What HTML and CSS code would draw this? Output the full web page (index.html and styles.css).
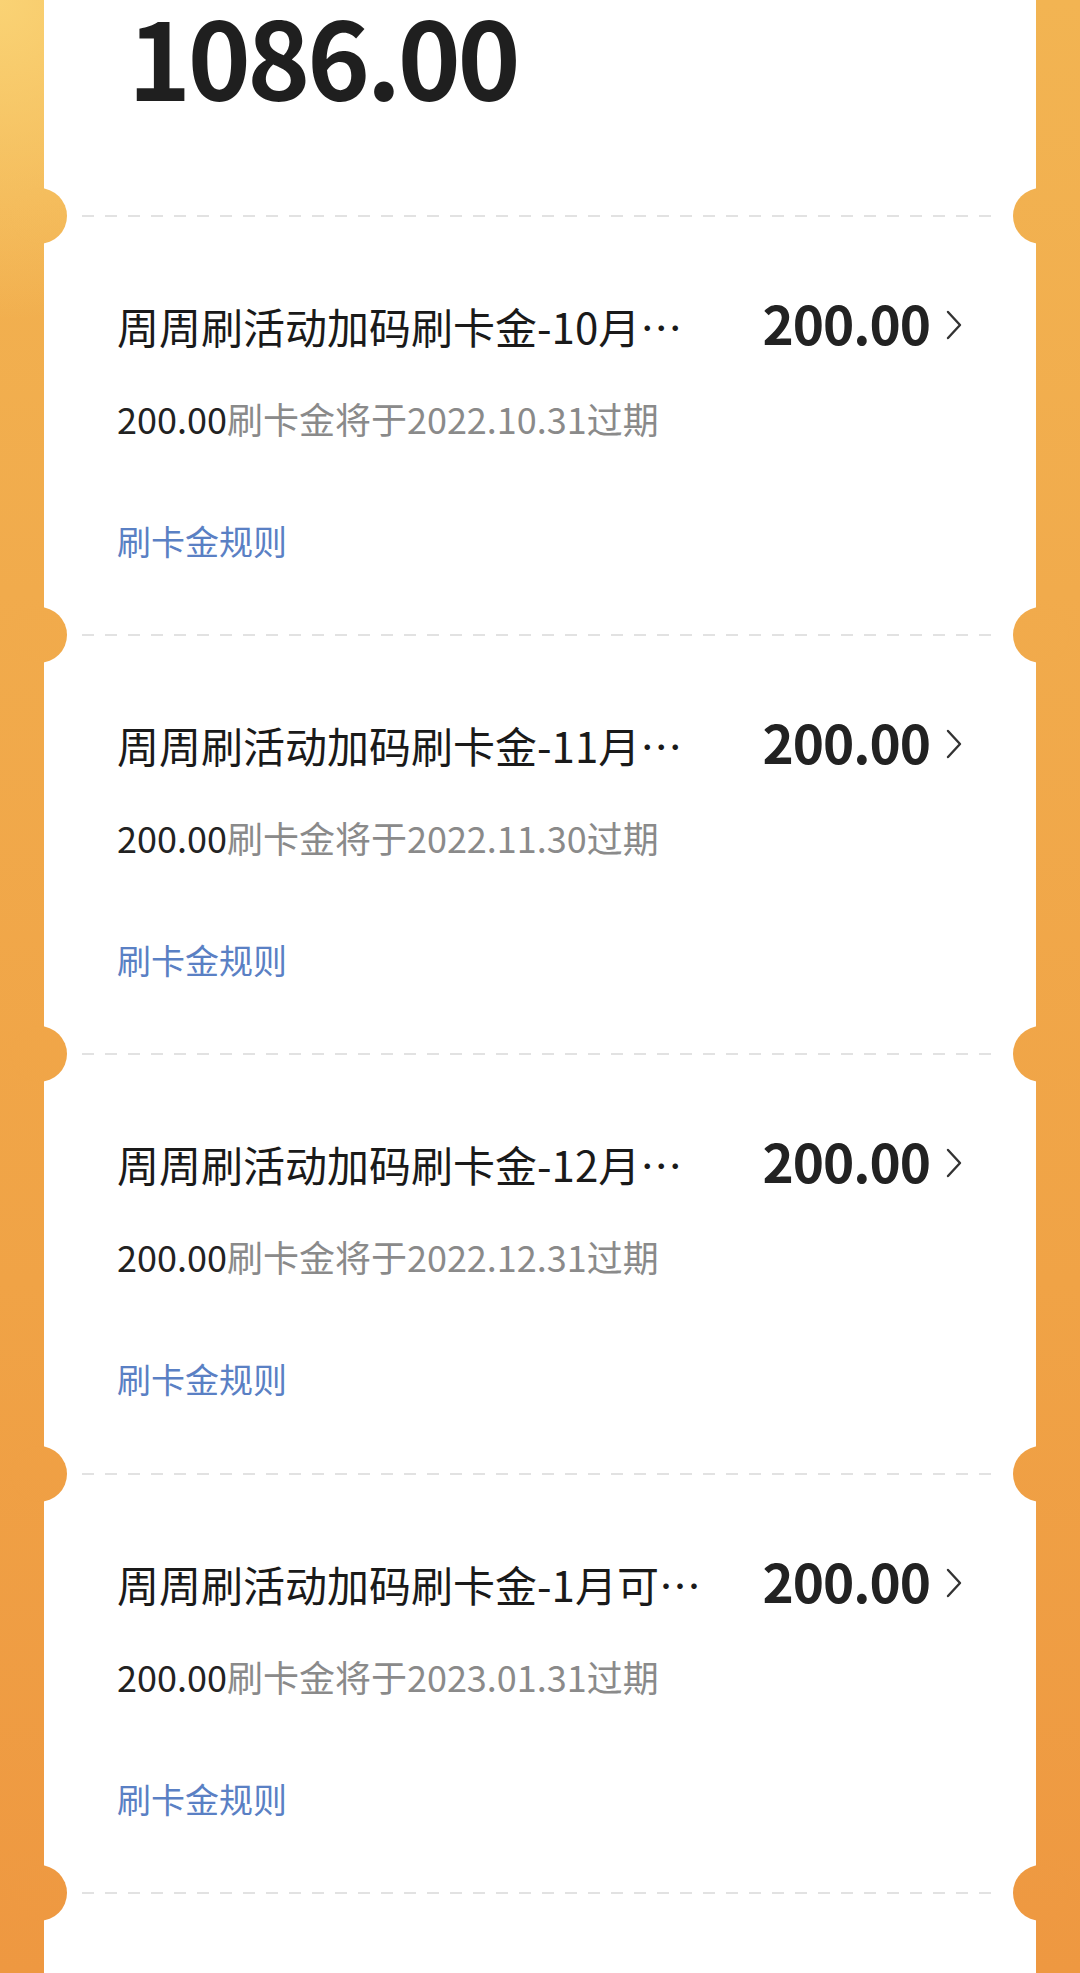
FILE: index.html
```html
<!DOCTYPE html>
<html lang="zh-CN">
<head>
<meta charset="utf-8">
<title>刷卡金</title>
<link rel="stylesheet" href="styles.css">
</head>
<body>
<div class="page">
  <div class="card">
    <div class="balance">1086.00</div>

    <div class="item">
      <div class="sep"></div>
      <div class="row">
        <div class="title">周周刷活动加码刷卡金-10月可用（限指定商户）</div>
        <div class="amt">200.00<svg class="chev" viewBox="0 0 16 30" width="16" height="30"><path d="M2 2 L14 15 L2 28" fill="none" stroke="#333" stroke-width="2.4" stroke-linecap="round" stroke-linejoin="round"/></svg></div>
      </div>
      <div class="sub"><span class="hl">200.00</span>刷卡金将于2022.10.31过期</div>
      <div class="rule">刷卡金规则</div>
    </div>

    <div class="item">
      <div class="sep"></div>
      <div class="row">
        <div class="title">周周刷活动加码刷卡金-11月可用（限指定商户）</div>
        <div class="amt">200.00<svg class="chev" viewBox="0 0 16 30" width="16" height="30"><path d="M2 2 L14 15 L2 28" fill="none" stroke="#333" stroke-width="2.4" stroke-linecap="round" stroke-linejoin="round"/></svg></div>
      </div>
      <div class="sub"><span class="hl">200.00</span>刷卡金将于2022.11.30过期</div>
      <div class="rule">刷卡金规则</div>
    </div>

    <div class="item">
      <div class="sep"></div>
      <div class="row">
        <div class="title">周周刷活动加码刷卡金-12月可用（限指定商户）</div>
        <div class="amt">200.00<svg class="chev" viewBox="0 0 16 30" width="16" height="30"><path d="M2 2 L14 15 L2 28" fill="none" stroke="#333" stroke-width="2.4" stroke-linecap="round" stroke-linejoin="round"/></svg></div>
      </div>
      <div class="sub"><span class="hl">200.00</span>刷卡金将于2022.12.31过期</div>
      <div class="rule">刷卡金规则</div>
    </div>

    <div class="item">
      <div class="sep"></div>
      <div class="row">
        <div class="title">周周刷活动加码刷卡金-1月可用（限指定商户）</div>
        <div class="amt">200.00<svg class="chev" viewBox="0 0 16 30" width="16" height="30"><path d="M2 2 L14 15 L2 28" fill="none" stroke="#333" stroke-width="2.4" stroke-linecap="round" stroke-linejoin="round"/></svg></div>
      </div>
      <div class="sub"><span class="hl">200.00</span>刷卡金将于2023.01.31过期</div>
      <div class="rule">刷卡金规则</div>
    </div>

    <div class="sep"></div>
  </div>
</div>
</body>
</html>
```

FILE: styles.css
```css
html, body {
  margin: 0;
  padding: 0;
}

body {
  font-family: "Noto Sans CJK SC", "Noto Sans", sans-serif;
  color: #1c1c1c;
}

.page,
.sep::before,
.sep::after {
  background:
    radial-gradient(circle at 0 0, rgba(250, 212, 118, 0.95) 0, rgba(250, 212, 118, 0) 320px),
    linear-gradient(to bottom, #f2b452 0, #f1ab4c 30%, #f0a346 65%, #ee9841 100%);
  background-attachment: fixed;
}

.page {
  height: 1973px;
  overflow: hidden;
  padding: 0 44px;
  box-sizing: border-box;
}

.card {
  background: #fff;
  height: 100%;
}

.balance {
  height: 215px;
  box-sizing: border-box;
  padding-left: 84px;
  font-size: 107px;
  line-height: 109px;
  font-weight: 700;
  letter-spacing: -3.5px;
  color: #1f1f1f;
}

.item {
  height: 419.2px;
}

.sep {
  position: relative;
  height: 2px;
  padding: 0 36px 0 38px;
  background: repeating-linear-gradient(to right, #e2e2e2 0 12px, transparent 12px 23px);
  background-clip: content-box;
  background-origin: content-box;
}

.sep::before,
.sep::after {
  content: "";
  position: absolute;
  top: -27px;
  width: 56px;
  height: 56px;
  border-radius: 50%;
}

.sep::before {
  left: -33px;
}

.sep::after {
  right: -33px;
}

.row {
  margin-top: 79px;
  padding: 0 74px 0 73px;
  height: 60px;
  display: flex;
  align-items: center;
  justify-content: space-between;
}

.title {
  width: 595px;
  font-size: 42px;
  line-height: 60px;
  white-space: nowrap;
  overflow: hidden;
  text-overflow: ellipsis;
  color: #1a1a1a;
}

.amt {
  display: flex;
  align-items: center;
  gap: 16px;
  padding-bottom: 8px;
  font-size: 53px;
  font-weight: 700;
  letter-spacing: -1px;
  line-height: 60px;
  color: #222;
}

.chev {
  display: block;
  flex: none;
  margin-top: 6px;
}

.sub {
  margin-top: 37px;
  padding-left: 73px;
  font-size: 36px;
  line-height: 50px;
  color: #8a8a8a;
}

.hl {
  color: #222;
}

.rule {
  margin-top: 73px;
  padding-left: 73px;
  font-size: 34px;
  line-height: 50px;
  color: #5a80c4;
}
```
